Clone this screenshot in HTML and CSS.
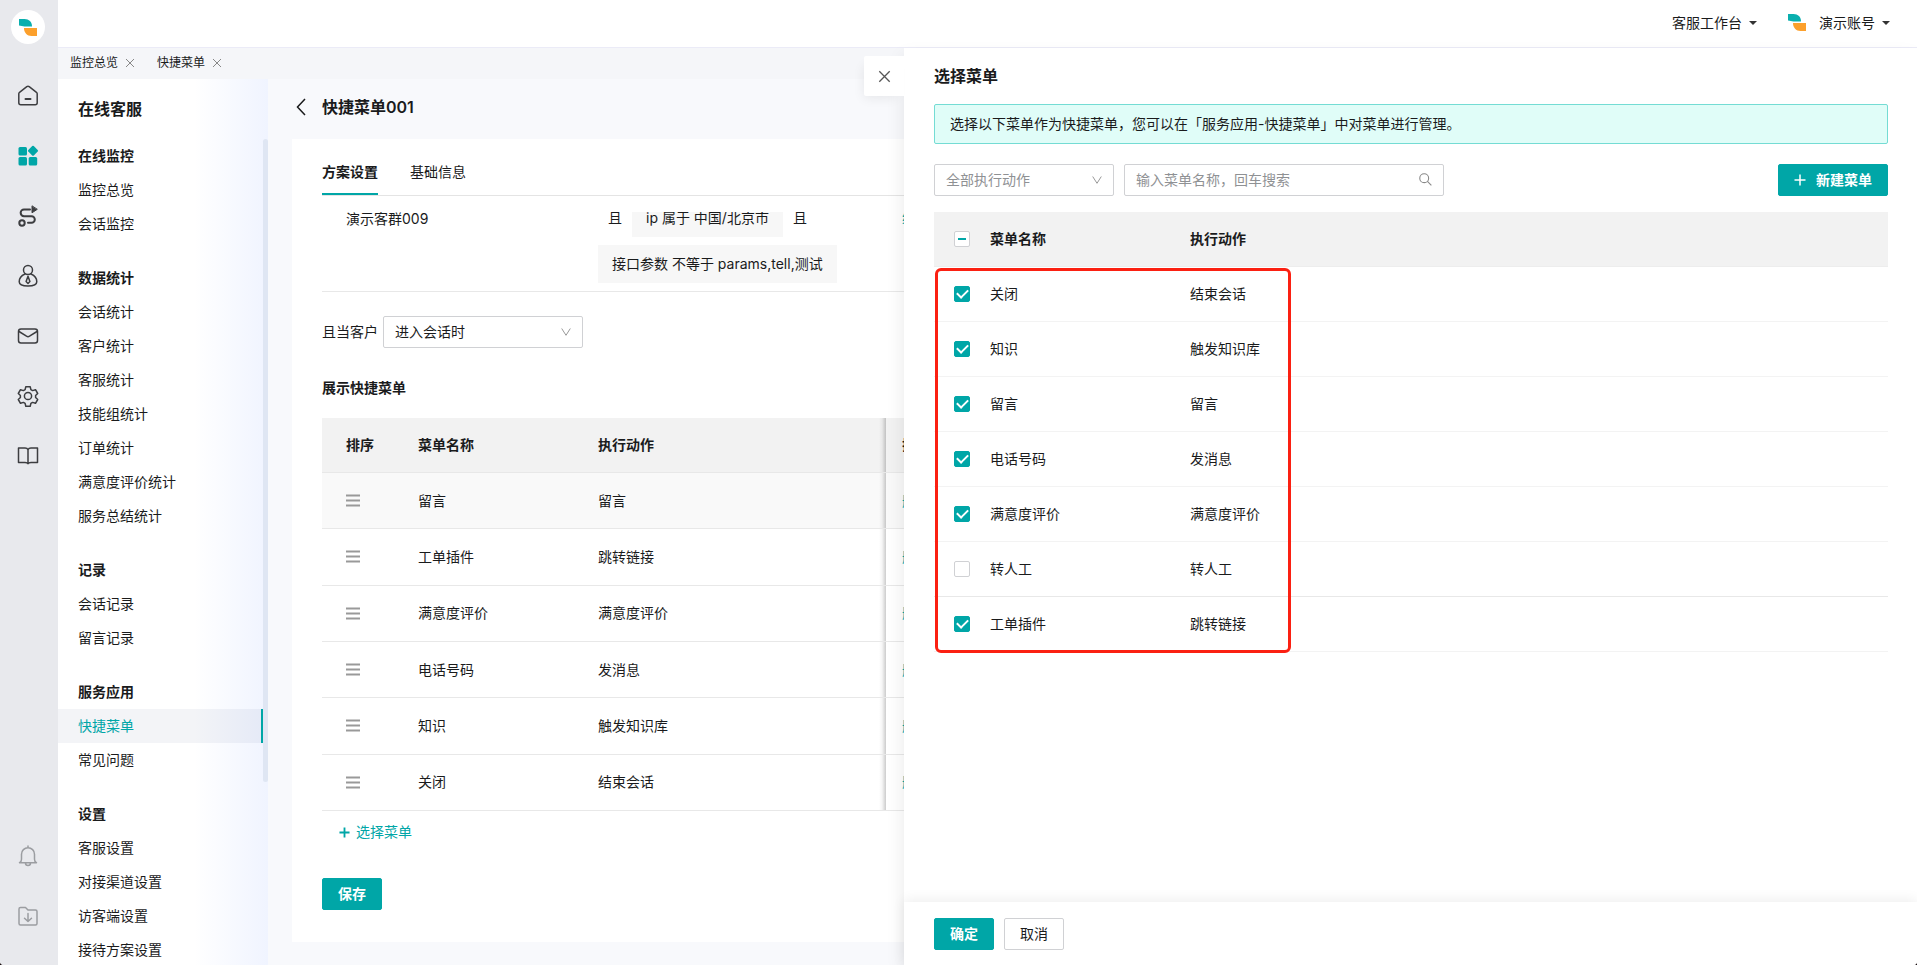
FILE: index.html
```
<!DOCTYPE html>
<html lang="zh-CN">
<head>
<meta charset="utf-8">
<title>快捷菜单</title>
<link rel="stylesheet" href="styles.css">
</head>
<body>
<svg class="defs" aria-hidden="true">
  <symbol id="logo" viewBox="0 0 18 17"><path d="M0 0h5.500C10 0 13 2.800 13 7.500H5.500L0 6.500z" fill="#0aafae"/><path d="M5 9h13v8h-5.500C8 17 5 13.500 5 9z" fill="#fca02c"/></symbol>
  <symbol id="close" viewBox="0 0 10 10"><path d="M1 1l8 8M9 1l-8 8"/></symbol>
  <symbol id="down" viewBox="0 0 10 10"><path d="M.7 1.500L5 8.300l4.300-6.800"/></symbol>
  <symbol id="plus" viewBox="0 0 12 12"><path d="M6 .5v11M.5 6h11"/></symbol>
  <symbol id="drag" viewBox="0 0 14 13"><path d="M0 1.500h14M0 6.500h14M0 11.500h14"/></symbol>
</svg>
<div class="app">
  <nav class="rail" aria-label="主导航">
    <a class="rail-logo" href="#" aria-label="首页标志"><svg class="logo"><use href="#logo"/></svg></a>
    <div class="rail-list">
      <a class="rail-item" href="#" aria-label="首页"><svg class="icon" viewBox="0 0 24 24"><path d="M3.500 8.300l7.300-5.600a2 2 0 0 1 2.400 0l7.300 5.600q.7.500.7 1.500v8.900a2 2 0 0 1-2 2H4.800a2 2 0 0 1-2-2V9.800q0-1 .7-1.500z"/><path d="M9.500 15h5" stroke-width="2"/></svg></a>
      <a class="rail-item rail-active" href="#" aria-label="应用"><svg class="icon icon-fill" viewBox="0 0 24 24"><rect x="2.500" y="3" width="8.500" height="8.500" rx="1.500"/><rect x="2.500" y="13" width="8.500" height="8.500" rx="1.500"/><rect x="12.700" y="13" width="8.500" height="8.500" rx="1.500"/><path d="M16.200 2a1.200 1.200 0 0 1 1.600 0l3.900 3.900a1.200 1.200 0 0 1 0 1.600l-3.900 3.900a1.200 1.200 0 0 1-1.600 0l-3.900-3.900a1.200 1.200 0 0 1 0-1.600z"/></svg></a>
      <a class="rail-item" href="#" aria-label="流程"><svg class="icon icon-bold" viewBox="0 0 24 24"><circle cx="6" cy="19" r="2.700"/><path d="M14 5.500H8a3.300 3.300 0 0 0 0 6.700h7.500a3.300 3.300 0 0 1 0 6.600H12"/><path d="M16 2.200v6.600l5-3.300z" fill="currentColor" stroke-width="1"/></svg></a>
      <a class="rail-item" href="#" aria-label="客户"><svg class="icon" viewBox="0 0 24 24"><circle cx="12" cy="6" r="4.500"/><path d="M9 10c-3.500 1.500-5.800 4.500-5.800 7.800 0 2.700 3.300 4.200 8.800 4.200s8.800-1.500 8.800-4.200c0-3.300-2.300-6.300-5.800-7.800"/><path d="M12 12.200l-1.900 5.300 1.900 2 1.900-2z"/></svg></a>
      <a class="rail-item" href="#" aria-label="邮件"><svg class="icon" viewBox="0 0 24 24"><rect x="2.500" y="5" width="19" height="14" rx="2.500"/><path d="M3 7.500l7.500 4.700a3 3 0 0 0 3 0L21 7.500"/></svg></a>
      <a class="rail-item" href="#" aria-label="设置"><svg class="icon" viewBox="0 0 24 24"><circle cx="12" cy="12" r="3.600"/><path d="M9.800 2.700h4.400l.7 2.900 1.700 1 2.900-.9 2.200 3.800-2.100 2v2l2.100 2-2.200 3.800-2.900-.9-1.700 1-.7 2.900H9.800l-.7-2.900-1.700-1-2.900.9-2.200-3.800 2.100-2v-2l-2.100-2 2.200-3.800 2.900.9 1.700-1z"/></svg></a>
      <a class="rail-item" href="#" aria-label="知识库"><svg class="icon" viewBox="0 0 24 24"><path d="M12 5.700C11.500 4.500 10.500 4 9 4H2.500v14.500H9q2.500 0 3 1.200.5-1.200 3-1.200h6.500V4H15c-1.500 0-2.500.5-3 1.700zM12 5.700v14"/></svg></a>
    </div>
    <div class="rail-list rail-bottom">
      <a class="rail-item" href="#" aria-label="通知"><svg class="icon" viewBox="0 0 24 24"><path d="M3.500 18.700c1.500-.7 2-1.700 2-3.500v-5a6.500 6.500 0 0 1 13 0v5c0 1.800.5 2.800 2 3.500zM9.500 19a2.500 2.500 0 0 0 5 0M12 2v1.500"/></svg></a>
      <a class="rail-item" href="#" aria-label="下载"><svg class="icon" viewBox="0 0 24 24"><path d="M3 5a1.500 1.500 0 0 1 1.500-1.500h5L12 6h7.500A1.500 1.500 0 0 1 21 7.500v12a1.500 1.500 0 0 1-1.500 1.500h-15A1.500 1.500 0 0 1 3 19.500zM12 9.500v8M8.500 14.200l3.500 3.300 3.500-3.300"/></svg></a>
    </div>
  </nav>

  <div class="shell">
    <header class="topbar">
      <button class="drop" type="button">客服工作台<span class="caret"></span></button>
      <button class="drop" type="button"><svg class="logo"><use href="#logo"/></svg>演示账号<span class="caret"></span></button>
    </header>

    <div class="workspace">
      <div class="tabs-bar">
        <div class="page-tab"><a href="#">监控总览</a><button type="button" aria-label="关闭监控总览"><svg class="x-small"><use href="#close"/></svg></button></div>
        <div class="page-tab"><a href="#">快捷菜单</a><button type="button" aria-label="关闭快捷菜单"><svg class="x-small"><use href="#close"/></svg></button></div>
      </div>

      <div class="columns">
        <aside class="side">
          <h1 class="side-title">在线客服</h1>
          <div class="side-scroll">
            <section class="group"><h2>在线监控</h2><a href="#">监控总览</a><a href="#">会话监控</a></section>
            <section class="group"><h2>数据统计</h2><a href="#">会话统计</a><a href="#">客户统计</a><a href="#">客服统计</a><a href="#">技能组统计</a><a href="#">订单统计</a><a href="#">满意度评价统计</a><a href="#">服务总结统计</a></section>
            <section class="group"><h2>记录</h2><a href="#">会话记录</a><a href="#">留言记录</a></section>
            <section class="group"><h2>服务应用</h2><a class="current" href="#">快捷菜单</a><a href="#">常见问题</a></section>
            <section class="group"><h2>设置</h2><a href="#">客服设置</a><a href="#">对接渠道设置</a><a href="#">访客端设置</a><a href="#">接待方案设置</a></section>
            <span class="scroll-thumb"></span>
          </div>
        </aside>

        <main class="main">
          <div class="page-head">
            <button type="button" aria-label="返回"><svg class="back" viewBox="0 0 10 18"><path d="M9 1L1.500 9 9 17"/></svg></button>
            <h2>快捷菜单001</h2>
          </div>
          <div class="card">
            <div class="card-tabs">
              <button class="card-tab selected" type="button">方案设置</button>
              <button class="card-tab" type="button">基础信息</button>
            </div>
            <div class="rules">
              <table class="grid rule-grid">
                <colgroup><col class="c-rule"><col class="c-action"><col></colgroup>
                <tbody><tr>
                  <td>演示客群009</td>
                  <td><div class="conds"><span class="and">且</span><span class="chip">ip 属于 中国/北京市</span><span class="and">且</span><span class="chip">接口参数 不等于 params,tell,测试</span></div></td>
                  <td><a href="#">编辑</a></td>
                </tr></tbody>
              </table>
            </div>
            <div class="when">
              <label for="when">且当客户</label>
              <span class="select when-select"><select id="when"><option>进入会话时</option></select><svg class="arrow"><use href="#down"/></svg></span>
            </div>
            <h3 class="sub">展示快捷菜单</h3>
            <table class="grid menu-grid">
              <colgroup><col class="c-sort"><col class="c-name"><col class="c-action"><col></colgroup>
              <thead><tr><th>排序</th><th>菜单名称</th><th class="edge">执行动作</th><th>操作</th></tr></thead>
              <tbody>
                <tr class="hover"><td><svg class="drag"><use href="#drag"/></svg></td><td>留言</td><td class="edge">留言</td><td><a href="#">删除</a></td></tr>
                <tr><td><svg class="drag"><use href="#drag"/></svg></td><td>工单插件</td><td class="edge">跳转链接</td><td><a href="#">删除</a></td></tr>
                <tr><td><svg class="drag"><use href="#drag"/></svg></td><td>满意度评价</td><td class="edge">满意度评价</td><td><a href="#">删除</a></td></tr>
                <tr><td><svg class="drag"><use href="#drag"/></svg></td><td>电话号码</td><td class="edge">发消息</td><td><a href="#">删除</a></td></tr>
                <tr><td><svg class="drag"><use href="#drag"/></svg></td><td>知识</td><td class="edge">触发知识库</td><td><a href="#">删除</a></td></tr>
                <tr><td><svg class="drag"><use href="#drag"/></svg></td><td>关闭</td><td class="edge">结束会话</td><td><a href="#">删除</a></td></tr>
              </tbody>
            </table>
            <button class="add" type="button"><svg class="plus"><use href="#plus"/></svg>选择菜单</button>
            <button class="btn primary" type="button">保存</button>
          </div>
        </main>
      </div>

      <section class="drawer" role="dialog" aria-labelledby="drawer-title">
        <button class="drawer-close" type="button" aria-label="关闭"><svg class="x-large"><use href="#close"/></svg></button>
        <div class="drawer-body">
          <h2 id="drawer-title">选择菜单</h2>
          <p class="notice">选择以下菜单作为快捷菜单，您可以在「服务应用-快捷菜单」中对菜单进行管理。</p>
          <div class="toolbar">
            <span class="select filter"><select aria-label="执行动作"><option>全部执行动作</option></select><svg class="arrow"><use href="#down"/></svg></span>
            <span class="search"><input type="text" placeholder="输入菜单名称，回车搜索" aria-label="搜索菜单"><svg class="lens" viewBox="0 0 12 12"><circle cx="4.800" cy="4.800" r="4.100"/><path d="M7.800 7.800l3.600 3.600"/></svg></span>
            <button class="btn primary create" type="button"><svg class="plus"><use href="#plus"/></svg>新建菜单</button>
          </div>
          <div class="pick">
            <table class="pick-table">
              <colgroup><col class="p-check"><col class="p-name"><col></colgroup>
              <thead><tr><th><input class="check partial" type="checkbox" aria-label="全选"></th><th>菜单名称</th><th>执行动作</th></tr></thead>
              <tbody>
                <tr><td><input class="check" type="checkbox" id="m1" checked></td><td><label for="m1">关闭</label></td><td>结束会话</td></tr>
                <tr><td><input class="check" type="checkbox" id="m2" checked></td><td><label for="m2">知识</label></td><td>触发知识库</td></tr>
                <tr><td><input class="check" type="checkbox" id="m3" checked></td><td><label for="m3">留言</label></td><td>留言</td></tr>
                <tr><td><input class="check" type="checkbox" id="m4" checked></td><td><label for="m4">电话号码</label></td><td>发消息</td></tr>
                <tr><td><input class="check" type="checkbox" id="m5" checked></td><td><label for="m5">满意度评价</label></td><td>满意度评价</td></tr>
                <tr class="strong"><td><input class="check" type="checkbox" id="m6"></td><td><label for="m6">转人工</label></td><td>转人工</td></tr>
                <tr><td><input class="check" type="checkbox" id="m7" checked></td><td><label for="m7">工单插件</label></td><td>跳转链接</td></tr>
              </tbody>
            </table>
            <span class="marker"></span>
          </div>
        </div>
        <footer class="drawer-foot">
          <button class="btn primary" type="button">确定</button>
          <button class="btn" type="button">取消</button>
        </footer>
      </section>
    </div>
  </div>
</div>
</body>
</html>
```
FILE: styles.css
```
* { box-sizing: border-box; }
html { background: #1c1214; }
body {
  margin: 0;
  font: 14px/20px Inter, "Noto Sans CJK SC", sans-serif;
  color: #1a1b1c;
}
h1, h2, h3, p { margin: 0; }
a { color: inherit; text-decoration: none; }
button, input, select { font: inherit; color: inherit; }
button { border: 0; padding: 0; background: none; cursor: pointer; }
svg { display: block; fill: none; stroke: currentColor; flex: none; }
.defs { position: absolute; width: 0; height: 0; }

.app {
  display: flex;
  height: 100vh;
  overflow: hidden;
  border-radius: 0 0 4px 4px;
  background: #fff;
}

/* icon rail */
.rail {
  display: flex;
  flex-direction: column;
  align-items: center;
  flex: none;
  width: 58px;
  padding: 10px 2px 37px 0;
  background: #e8e9ed;
  color: #3c3d40;
}
.rail-logo {
  display: grid;
  place-items: center;
  width: 34px;
  height: 34px;
  border-radius: 50%;
  background: #fff;
}
.logo { width: 18px; height: 17px; stroke: none; }
.rail-list { display: flex; flex-direction: column; gap: 36px; margin-top: 40px; }
.rail-item { display: block; }
.icon { width: 24px; height: 24px; stroke-width: 1.500; stroke-linejoin: round; stroke-linecap: round; }
.icon-fill { fill: currentColor; stroke: none; }
.icon-bold { stroke-width: 2; }
.rail-active { color: #00a6a7; }
.rail-bottom { margin-top: auto; color: #9b9da1; }

/* top bar */
.shell { display: flex; flex-direction: column; flex: 1; min-width: 0; }
.topbar {
  display: flex;
  justify-content: flex-end;
  align-items: center;
  gap: 31px;
  flex: none;
  height: 48px;
  padding: 0 27px 2px 0;
  border-bottom: 1px solid #ebebf7;
}
.drop { display: flex; align-items: center; }
.drop .logo { margin-right: 13px; }
.caret { margin-left: 7px; border: 4px solid transparent; border-top-color: #333; border-bottom: 0; }

.workspace { position: relative; display: flex; flex-direction: column; flex: 1; min-height: 0; }
.tabs-bar {
  display: flex;
  align-items: center;
  gap: 22px;
  flex: none;
  height: 31px;
  padding: 0 12px 2px;
  background: #f5f6f9;
  font-size: 12px;
}
.page-tab { display: flex; align-items: center; gap: 7px; }
.x-small { width: 10px; height: 10px; stroke: #888; }
.columns { display: flex; flex: 1; min-height: 0; }

/* side menu */
.side {
  display: flex;
  flex-direction: column;
  flex: none;
  width: 210px;
  background: linear-gradient(90deg, #fff 65%, #f0f4ff);
}
.side-title { padding: 18px 20px; font-size: 16px; line-height: 24px; font-weight: 600; }
.side-scroll { position: relative; flex: 1; min-height: 0; overflow: hidden; padding-right: 5px; }
.group { margin-bottom: 20px; }
.group h2, .group a { display: block; padding: 0 20px; font-size: 14px; line-height: 34px; }
.group h2 { font-weight: 600; }
.group .current { color: #00a6a7; background: rgba(22, 36, 90, .05); border-right: 2px solid #00a6a7; }
.scroll-thumb { position: absolute; top: 0; right: 0; width: 5px; height: 643px; border-radius: 3px; background: #dfe6f3; }

/* main page */
.main { flex: 1; min-width: 0; padding: 0 24px; background: #f8f9fc; }
.page-head { display: flex; align-items: center; gap: 16px; height: 60px; padding: 0 4px 4px; }
.page-head h2 { font-size: 16px; line-height: 24px; font-weight: 600; }
.back { width: 10px; height: 18px; stroke-width: 1.500; }
.card { padding: 16px 30px 32px; background: #fff; }
.card-tabs { display: flex; gap: 32px; border-bottom: 1px solid #e4e4e4; }
.card-tab { height: 40px; line-height: 34px; padding-bottom: 6px; border-bottom: 2px solid transparent; }
.card-tab.selected { font-weight: 600; border-color: #00a6a7; }

.grid { width: 100%; border-collapse: separate; border-spacing: 0; table-layout: fixed; text-align: left; }
.grid td, .grid th { padding: 0 16px; border-bottom: 1px solid #e8e8e8; }
.grid td:first-child, .grid th:first-child { padding-left: 24px; }
.grid a { color: #00a6a7; }
.c-rule { width: 260px; }
.c-sort { width: 80px; }
.c-name { width: 180px; }
.c-action { width: 304px; }
.rules { margin-top: 16px; overflow: hidden; }
.rule-grid { margin-top: -13px; line-height: 38px; }
.rule-grid td { vertical-align: top; padding-bottom: 8px; }
.rule-grid td:first-child { line-height: 40px; }
.conds { display: flex; flex-wrap: wrap; row-gap: 8px; }
.and { padding: 0 10px; }
.chip { padding: 0 14px; background: #f7f7f7; }

.when { display: flex; align-items: center; gap: 5px; margin-top: 24px; }
.select { position: relative; display: block; }
.select select {
  display: block;
  width: 100%;
  height: 32px;
  padding: 0 11px;
  border: 1px solid #d0d1d4;
  border-radius: 2px;
  background: #fff;
  appearance: none;
}
.when-select { width: 200px; }
.arrow { position: absolute; right: 12px; top: 11px; width: 10px; height: 10px; stroke: #999; pointer-events: none; }
.sub { margin: 30px 0 20px; font-size: 14px; line-height: 20px; font-weight: 600; }

.menu-grid { height: 393px; }
.menu-grid th { height: 55px; background-color: #f2f2f2; font-weight: 600; }
.menu-grid .hover td { background-color: #f9f9f9; }
.menu-grid .edge {
  background-image: linear-gradient(270deg, rgba(0, 0, 0, .2), rgba(0, 0, 0, .04) 4px, transparent 7px);
  background-origin: border-box;
}
.drag { width: 14px; height: 13px; stroke: #999; stroke-width: 2; }
.plus { width: 11px; height: 11px; stroke-width: 2; }
.add { display: flex; align-items: center; gap: 6px; margin: 11px 0 36px; padding-left: 17px; color: #00a6a7; }
.btn {
  min-width: 60px;
  height: 32px;
  border: 1px solid #d0d1d4;
  border-radius: 2px;
  background: #fff;
}
.btn.primary { border-color: #00a6a7; background: #00a6a7; color: #fff; font-weight: 600; }

/* drawer */
.drawer {
  position: absolute;
  top: 0;
  right: 0;
  bottom: 0;
  left: 846px;
  display: flex;
  flex-direction: column;
  background: #fff;
  box-shadow: -2px 8px 16px rgba(0, 0, 0, .08);
}
.drawer-close {
  position: absolute;
  top: 8px;
  left: -40px;
  display: grid;
  place-items: center;
  width: 40px;
  height: 40px;
  border-radius: 2px 0 0 2px;
  background: #fff;
  box-shadow: -4px 6px 12px -4px rgba(0, 0, 0, .08);
}
.x-large { width: 13px; height: 13px; stroke: #555; }
.drawer-body { flex: 1; min-height: 0; padding: 16px 29px 0 30px; }
.drawer-body h2 { font-size: 16px; line-height: 24px; font-weight: 600; }
.notice { margin-top: 16px; padding: 9px 15px; border: 1px solid #74dcd4; border-radius: 2px; background: #e0fdf8; }
.toolbar { display: flex; gap: 10px; margin: 20px 0 16px; }
.filter { width: 180px; color: #8f9194; }
.search { position: relative; width: 320px; }
.search input { display: block; width: 100%; height: 32px; padding: 0 36px 1px 11px; border: 1px solid #d0d1d4; border-radius: 2px; }
.search input::placeholder { color: #8f9194; opacity: 1; }
.lens { position: absolute; top: 9px; right: 12px; width: 13px; height: 13px; stroke: #888; }
.create { display: flex; align-items: center; gap: 10px; margin-left: auto; padding: 0 15px; }
.create .plus { width: 12px; height: 12px; stroke-width: 1.500; }

.pick { position: relative; }
.pick-table { width: 100%; border-collapse: separate; border-spacing: 0; table-layout: fixed; text-align: left; }
.pick-table th, .pick-table td { height: 55px; padding: 0; border-bottom: 1px solid #f3f3f3; }
.pick-table th { background: #f2f2f2; font-weight: 600; border-color: #ededed; }
.pick-table .strong td { border-color: #e8e8e8; }
.pick-table th:first-child, .pick-table td:first-child { padding-left: 20px; }
.p-check { width: 56px; }
.p-name { width: 200px; }
.check {
  display: grid;
  place-items: center;
  width: 16px;
  height: 16px;
  margin: 0;
  border: 1px solid #d0d1d4;
  border-radius: 2px;
  background: #fff;
  appearance: none;
}
.check:checked { border-color: #00a6a7; background: #00a6a7; }
.check:checked::after { content: ""; width: 5px; height: 9px; margin-bottom: 3px; border: solid #fff; border-width: 0 2px 2px 0; transform: rotate(45deg); }
.partial::after { content: ""; width: 8px; height: 2px; background: #00a6a7; }
.marker { position: absolute; top: 56px; left: 1px; width: 356px; height: 385px; border: 3px solid #fb2012; border-radius: 6px; pointer-events: none; }
.drawer-foot { display: flex; gap: 10px; padding: 16px 30px 15px; box-shadow: 0 -2px 12px rgba(0, 0, 0, .07); }
```
